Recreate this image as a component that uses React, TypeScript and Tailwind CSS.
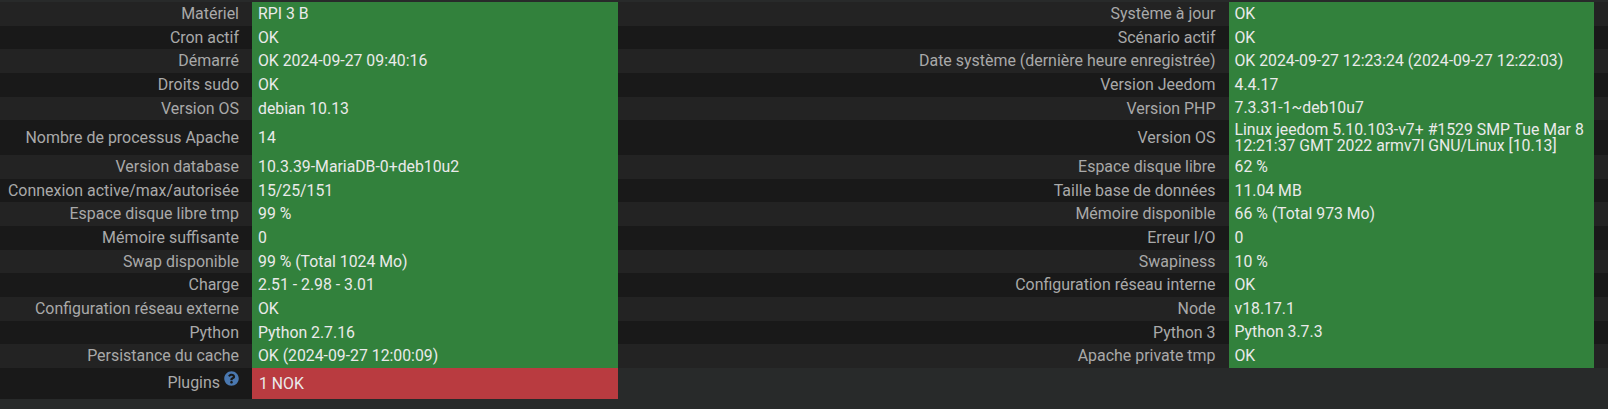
const rows: [string, string, string, string, boolean?][] = [
  ["Matériel", "RPI 3 B", "Système à jour", "OK"],
  ["Cron actif", "OK", "Scénario actif", "OK"],
  ["Démarré", "OK 2024-09-27 09:40:16", "Date système (dernière heure enregistrée)", "OK 2024-09-27 12:23:24 (2024-09-27 12:22:03)"],
  ["Droits sudo", "OK", "Version Jeedom", "4.4.17"],
  ["Version OS", "debian 10.13", "Version PHP", "7.3.31-1~deb10u7"],
  ["Nombre de processus Apache", "14", "Version OS", "Linux jeedom 5.10.103-v7+ #1529 SMP Tue Mar 8 12:21:37 GMT 2022 armv7l GNU/Linux [10.13]", true],
  ["Version database", "10.3.39-MariaDB-0+deb10u2", "Espace disque libre", "62 %"],
  ["Connexion active/max/autorisée", "15/25/151", "Taille base de données", "11.04 MB"],
  ["Espace disque libre tmp", "99 %", "Mémoire disponible", "66 % (Total 973 Mo)"],
  ["Mémoire suffisante", "0", "Erreur I/O", "0"],
  ["Swap disponible", "99 % (Total 1024 Mo)", "Swapiness", "10 %"],
  ["Charge", "2.51 - 2.98 - 3.01", "Configuration réseau interne", "OK"],
  ["Configuration réseau externe", "OK", "Node", "v18.17.1"],
  ["Python", "Python 2.7.16", "Python 3", "Python 3.7.3"],
  ["Persistance du cache", "OK (2024-09-27 12:00:09)", "Apache private tmp", "OK"],
];

function Row({ r, i }: { r: (typeof rows)[number]; i: number }) {
  return (
    <div
      className={`grid grid-cols-[252px_366px_610.5px_365.5px_14px] ${r[4] ? "h-[35px]" : "h-[23.64px]"} ${i % 2 === 0 ? "bg-[#232323]" : "bg-[#191919]"}`}
    >
      <div className="flex items-center justify-end pr-[13px] text-[#a9a9a9] whitespace-nowrap">{r[0]}</div>
      <div className="flex items-center bg-[#32813c] pl-[6px] text-[15.8px] text-[#eaeaea]">{r[1]}</div>
      <div className="flex items-center justify-end pr-[13px] text-[#a9a9a9] whitespace-nowrap">{r[2]}</div>
      <div className="flex items-center bg-[#32813c] pl-[6px] text-[15.8px] text-[#eaeaea] leading-[16px]">{r[3]}</div>
      <div />
    </div>
  );
}

export default function App() {
  return (
    <div className="h-[409px] w-[1608px] overflow-hidden bg-[#282a2a] pt-[2px] text-[15.95px] font-['Roboto',sans-serif]">
      {rows.map((r, i) => (
        <Row key={i} r={r} i={i} />
      ))}
      <div className="grid h-[31px] grid-cols-[252px_366px]">
        <div className="flex items-center justify-end bg-[#191919] pr-[13px] text-[#a9a9a9]">
          Plugins
          <svg viewBox="0 0 512 512" className="mb-[9px] ml-[4px] h-[15px] w-[15px]" fill="#4a78b0">
            <path d="M504 256c0 137-111 248-248 248S8 393 8 256 119 8 256 8s248 111 248 248zM262.700 90c-54.500 0-89.300 23-116.600 63.800-3.500 5.300-2.400 12.400 2.700 16.300l34.700 26.300c5.200 3.900 12.600 3 16.700-2.100 17.900-22.700 30.100-35.800 57.300-35.800 20.400 0 45.700 13.100 45.700 32.900 0 15-12.400 22.700-32.600 34-23.600 13.200-54.800 29.700-54.800 70.800V300c0 6.600 5.400 12 12 12h56c6.600 0 12-5.400 12-12v-1.300c0-28.500 83.200-29.700 83.200-106.700 0-58-60.200-102-116.600-102zM256 338c-25.400 0-46 20.600-46 46s20.600 46 46 46 46-20.600 46-46-20.600-46-46-46z" />
          </svg>
        </div>
        <div className="flex items-center bg-[#b93b40] pl-[7px] pt-[1px] text-[15.8px] text-[#eaeaea]">1 NOK</div>
      </div>
    </div>
  );
}
